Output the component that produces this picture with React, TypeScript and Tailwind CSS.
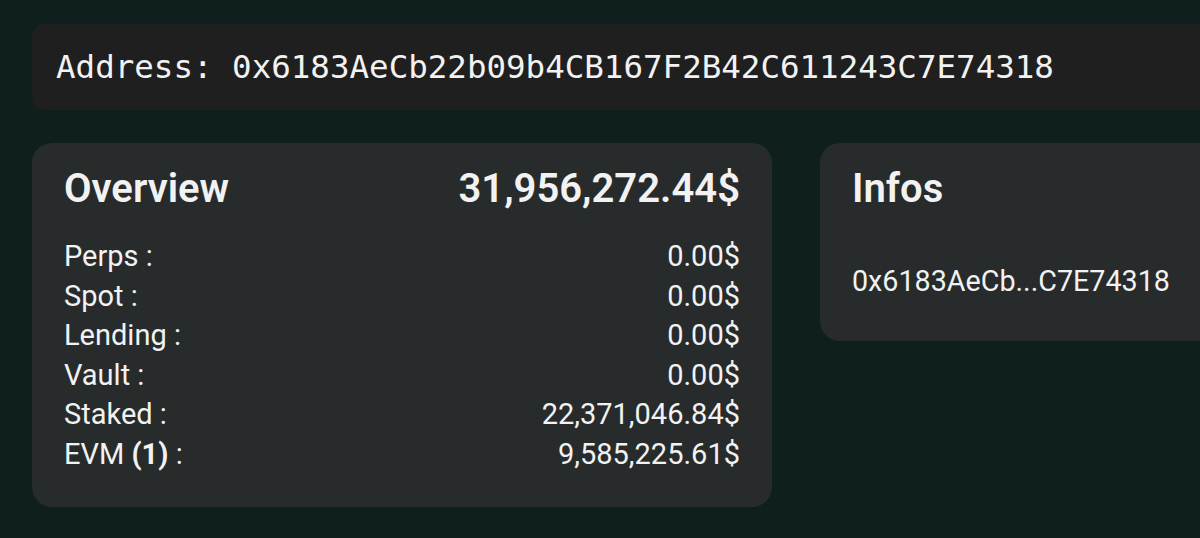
import React from "react";

const rows: { label: React.ReactNode; value: string }[] = [
    { label: "Perps :", value: "0.00$" },
    { label: "Spot :", value: "0.00$" },
    { label: "Lending :", value: "0.00$" },
    { label: "Vault :", value: "0.00$" },
    { label: "Staked :", value: "22,371,046.84$" },
    { label: <>EVM <span className="font-bold">(1)</span> :</>, value: "9,585,225.61$" },
];

export default function App() {
    return (
        <div className="w-[1200px] h-[538px] overflow-hidden bg-[#0e1f1d] text-[#f2f2f2] font-['Roboto',sans-serif]">
            <div className="w-[1600px] pl-8 pt-6">
                <div className="h-[86px] rounded-xl bg-[#1f1f1f] flex items-center pl-6">
                    <span className="font-['DejaVu_Sans_Mono',monospace] text-[32.5px] leading-none">
                        Address: 0x6183AeCb22b09b4CB167F2B42C611243C7E74318
                    </span>
                </div>

                <div className="flex gap-12 items-start mt-[33px]">
                    <div className="w-[740px] shrink-0 rounded-[20px] bg-[#272b2c] px-8 pt-6 pb-8">
                        <div className="flex justify-between items-center">
                            <h2 className="text-[40px] leading-[44px] font-semibold">Overview</h2>
                            <span className="text-[40px] leading-[44px] font-semibold">31,956,272.44$</span>
                        </div>
                        <div className="mt-[26px] text-[29px] leading-[39.6px]">
                            {rows.map((r, i) => (
                                <div key={i} className="flex justify-between">
                                    <span>{r.label}</span>
                                    <span>{r.value}</span>
                                </div>
                            ))}
                        </div>
                    </div>

                    <div className="w-[740px] shrink-0 rounded-[20px] bg-[#272b2c] px-8 pt-6 pb-10">
                        <h2 className="text-[40px] leading-[44px] font-semibold">Infos</h2>
                        <div className="mt-[50px] text-[28.7px] leading-10">0x6183AeCb...C7E74318</div>
                    </div>
                </div>
            </div>
        </div>
    );
}
